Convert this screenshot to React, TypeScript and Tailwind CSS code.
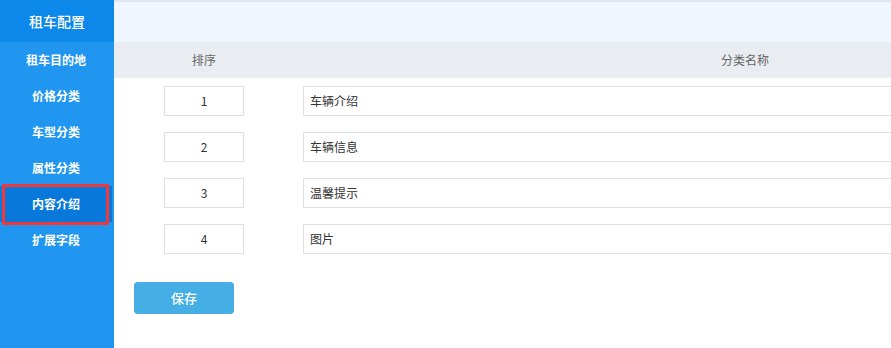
import React from 'react';

const menu = ['租车目的地', '价格分类', '车型分类', '属性分类', '内容介绍', '扩展字段'];

const rows = [
  { order: '1', name: '车辆介绍' },
  { order: '2', name: '车辆信息' },
  { order: '3', name: '温馨提示' },
  { order: '4', name: '图片' },
];

export default function App() {
  return (
    <div
      className="flex w-[891px] h-[348px] overflow-hidden bg-white"
      style={{ fontFamily: '"Noto Sans CJK SC", "Liberation Sans", sans-serif' }}
    >
      {/* sidebar */}
      <div className="w-[114px] shrink-0 bg-[#2196f1] flex flex-col">
        <div className="h-[42px] bg-[#0b88e9] flex items-center justify-center text-white text-[14px] font-medium">
          租车配置
        </div>
        {menu.map((m) => {
          const active = m === '内容介绍';
          return (
            <div key={m} className="relative h-[36px]">
              <div
                className={`h-full w-[112px] flex items-center justify-center text-white text-[12px] font-semibold ${
                  active ? 'bg-[#0879da]' : ''
                }`}
              >
                {m}
              </div>
              {active && (
                <div className="absolute left-[2px] top-[-2px] w-[107px] h-[41px] border-[3px] border-[#f0383a] pointer-events-none" />
              )}
            </div>
          );
        })}
      </div>

      {/* main */}
      <div className="flex-1 min-w-0 flex flex-col overflow-hidden">
        <div className="h-[42px] shrink-0 bg-[#eff6fe] border-t-2 border-[#e3e7ed]" />
        <div className="w-[1082px]">
          <div className="flex h-[36px] bg-[#e9edf2] text-[12px] text-[#666]">
            <div className="w-[180px] flex items-center justify-center">排序</div>
            <div className="w-[902px] flex items-center justify-center">分类名称</div>
          </div>
          <div className="pt-[8px] flex flex-col gap-[16px]">
            {rows.map((r) => (
              <div key={r.order} className="flex h-[30px]">
                <div className="w-[180px] flex justify-center">
                  <div className="w-[80px] h-[30px] border border-[#dcdfe3] flex items-center justify-center text-[12px] text-[#333]">
                    {r.order}
                  </div>
                </div>
                <div className="w-[902px] pl-[9px]">
                  <div className="h-[30px] border border-[#dcdfe3] flex items-center px-[6px] text-[12px] text-[#333]">
                    {r.name}
                  </div>
                </div>
              </div>
            ))}
          </div>
          <div className="pt-[28px] pl-[20px]">
            <button className="w-[100px] h-[32px] rounded-[4px] bg-[#45aee4] text-white text-[13px] font-medium">
              保存
            </button>
          </div>
        </div>
      </div>
    </div>
  );
}
